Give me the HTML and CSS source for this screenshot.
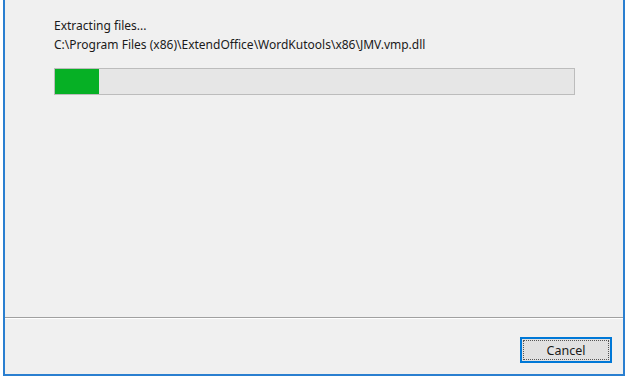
FILE: index.html
```html
<!DOCTYPE html>
<html>
<head>
<meta charset="utf-8">
<link rel="stylesheet" href="styles.css">
</head>
<body>
<div class="window">
  <div class="main">
    <div class="status">Extracting files...</div>
    <div class="path">C:\Program Files (x86)\ExtendOffice\WordKutools\x86\JMV.vmp.dll</div>
    <div class="progress"><div class="fill" style="width:44px"></div></div>
  </div>
  <div class="separator"></div>
  <div class="footer">
    <button class="btn">Cancel</button>
  </div>
</div>
</body>
</html>
```

FILE: styles.css
```css
html, body {
  margin: 0;
  padding: 0;
  background: #ffffff;
}
body {
  width: 630px;
  height: 378px;
  overflow: hidden;
  font-family: "Noto Sans", "Open Sans", sans-serif;
  font-size: 12px;
  color: #1a1a1a;
}
.window {
  margin-left: 3px;
  width: 618px;
  height: 374px;
  border: 2px solid #2a7fd0;
  border-top: none;
  background: #f0f0f0;
  display: flex;
  flex-direction: column;
}
.main {
  height: 317px;
  box-sizing: border-box;
  padding: 18px 0 0 49px;
}
.status, .path {
  line-height: 15px;
}
.path {
  margin-top: 4px;
}
.progress {
  margin-top: 16px;
  width: 519px;
  height: 25px;
  border: 1px solid #bcbcbc;
  background: #e6e6e6;
}
.fill {
  height: 100%;
  background: #06b025;
}
.separator {
  height: 1px;
  background: #a0a0a0;
  border-bottom: 1px solid #ffffff;
}
.footer {
  flex: 1;
  display: flex;
  justify-content: flex-end;
  align-items: flex-start;
  padding: 18px 11px 0 0;
}
.btn {
  width: 92px;
  height: 26px;
  box-sizing: border-box;
  border: 2px solid #0078d7;
  background: #e1e1e1;
  font-family: "Noto Sans", "Open Sans", sans-serif;
  font-size: 12.5px;
  color: #1a1a1a;
  padding: 0;
  outline: 1px dotted #555;
  outline-offset: -4px;
}
```
